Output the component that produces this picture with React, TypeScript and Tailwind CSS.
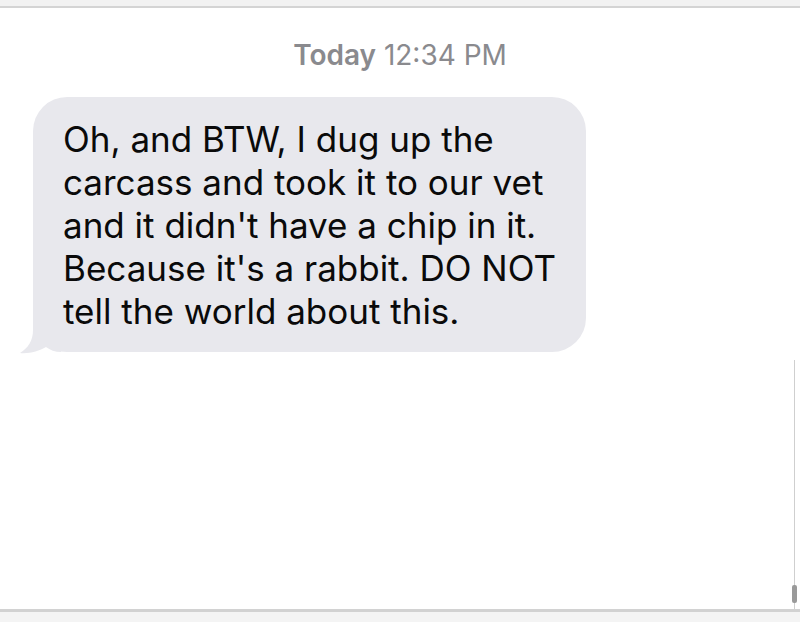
import React from "react";

const lines = [
  "Oh, and BTW, I dug up the",
  "carcass and took it to our vet",
  "and it didn't have a chip in it.",
  "Because it's a rabbit. DO NOT",
  "tell the world about this.",
];

const MessageBubble = ({ lines }: { lines: string[] }) => {
  return (
    <div className="relative ml-[33px] w-[553px] rounded-[34px] bg-[#e8e8ed] pl-[30px] pt-[21px] pb-[19px]">
      <svg
        className="absolute -left-[14px] -bottom-[3px]"
        width="50"
        height="50"
        viewBox="0 0 50 50"
      >
        <path
          d="M14 0 L14 25 C14 36 9 43 1 48 C10 49 20 46 27 42 C31 45 36 47 42 47 L42 20 Z"
          fill="#e8e8ed"
        />
      </svg>
      <div className="relative text-[35px] leading-[43px] text-[#0a0a0a] [font-family:Inter,'Liberation_Sans',sans-serif]">
        {lines.map((line, i) => (
          <div key={i} className="whitespace-nowrap">
            {line}
          </div>
        ))}
      </div>
    </div>
  );
};

export default function App() {
  return (
    <div className="relative flex h-[622px] w-[800px] flex-col overflow-hidden bg-white [font-family:Inter,'Liberation_Sans',sans-serif]">
      <div className="h-[8px] shrink-0 border-b-2 border-[#d4d4d4] bg-[#f2f2f2]" />
      <div className="flex grow flex-col">
        <div className="mt-[30px] text-center text-[28px] leading-[34px] text-[#8a8a8e]">
          <span className="font-semibold">Today</span> 12:34 PM
        </div>
        <div className="mt-[25px]">
          <MessageBubble lines={lines} />
        </div>
      </div>
      <div className="h-[13px] shrink-0 border-t-[3px] border-[#d2d2d2] bg-[#f4f4f4]" />

      <div className="absolute right-[5px] top-[360px] bottom-[13px] w-[1px] bg-[#cfcfcf]" />
      <div className="absolute right-[3px] top-[585px] h-[18px] w-[5px] rounded-[2px] bg-[#9a9a9a]" />
    </div>
  );
}
